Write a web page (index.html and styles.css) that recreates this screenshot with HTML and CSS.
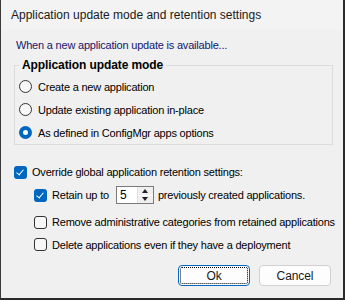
FILE: index.html
```html
<!DOCTYPE html>
<html lang="en">
<head>
    <meta charset="UTF-8">
    <title>Application update mode and retention settings</title>
    <link rel="stylesheet" href="styles.css">
</head>
<body>
    <div class="window">
        <div class="titlebar">Application update mode and retention settings</div>
        <div class="content">
            <p class="intro">When a new application update is available...</p>
            <fieldset class="group">
                <legend>Application update mode</legend>
                <label class="opt"><span class="radio"></span>Create a new application</label>
                <label class="opt"><span class="radio"></span>Update existing application in-place</label>
                <label class="opt"><span class="radio on"></span>As defined in ConfigMgr apps options</label>
            </fieldset>

            <label class="opt override"><span class="check on"></span>Override global application retention settings:</label>
            <div class="sub">
                <div class="opt retain">
                    <span class="check on"></span>Retain up to
                    <span class="spin">
                        <span class="spin-val">5</span>
                        <span class="spin-btns">
                            <span class="arrow up"></span>
                            <span class="arrow down"></span>
                        </span>
                    </span>
                    previously created applications.
                </div>
                <label class="opt remove"><span class="check"></span>Remove administrative categories from retained applications</label>
                <label class="opt delete"><span class="check"></span>Delete applications even if they have a deployment</label>
            </div>

            <div class="buttons">
                <button class="btn default">Ok</button>
                <button class="btn">Cancel</button>
            </div>
        </div>
    </div>
</body>
</html>
```

FILE: styles.css
```css
* {
    margin: 0;
    padding: 0;
    box-sizing: border-box;
    font-family: "Liberation Sans", Arial, sans-serif;
}
body {
    width: 345px;
    height: 300px;
    overflow: hidden;
    background: #2b2b2b;
}
.window {
    width: 345px;
    height: 300px;
    background: #f0f0f0;
    border-left: 1px solid #3a3a3a;
    border-right: 2px solid #2b2b2b;
    border-bottom: 2px solid #2b2b2b;
    color: #000;
    font-size: 11px;
    letter-spacing: -0.2px;
}
.titlebar {
    height: 30px;
    line-height: 31px;
    background: #f3f3f3;
    padding-left: 10px;
    font-size: 12px;
    letter-spacing: 0;
    color: #1a1a1a;
}
.content {
    padding: 8px 12px 0 13px;
}
.intro {
    color: #16166e;
    line-height: 14px;
    padding-left: 2px;
}
.group {
    margin-top: 6px;
    width: 319px;
    height: 87px;
    border: 1px solid #dcdcdc;
    padding: 3px 0 0 4px;
}
.group legend {
    font-weight: bold;
    font-size: 12px;
    letter-spacing: -0.1px;
    line-height: 14px;
    padding: 0 3px;
}
.opt {
    display: flex;
    align-items: center;
    height: 23px;
    white-space: nowrap;
}
.radio {
    flex-shrink: 0;
    width: 13px;
    height: 13px;
    border: 1px solid #333;
    border-radius: 50%;
    background: #f7f7f7;
    margin-right: 6px;
    position: relative;
}
.radio.on {
    border: none;
    background: #0067c0;
}
.radio.on::after {
    content: "";
    position: absolute;
    left: 4px;
    top: 4px;
    width: 5px;
    height: 5px;
    border-radius: 50%;
    background: #fff;
}
.check {
    flex-shrink: 0;
    width: 13px;
    height: 13px;
    border: 1px solid #333;
    border-radius: 3px;
    background: #f7f7f7;
    margin-right: 5px;
    position: relative;
}
.check.on {
    border: none;
    background: #0067c0;
}
.check.on::after {
    content: "";
    position: absolute;
    left: 4px;
    top: 2px;
    width: 3px;
    height: 6px;
    border: solid #fff;
    border-width: 0 1.5px 1.5px 0;
    transform: rotate(40deg);
}
.override {
    margin-top: 17px;
    height: 20px;
}
.sub {
    padding-left: 20px;
}
.retain {
    height: 26px;
}
.spin {
    flex-shrink: 0;
    display: flex;
    width: 38px;
    height: 18px;
    margin: 0 4px 0 7px;
    border: 1px solid #7a7a7a;
    background: #fff;
    letter-spacing: 0;
}
.spin-val {
    flex: 1;
    padding: 1px 0 0 3px;
    font-size: 12px;
}
.spin-btns {
    width: 16px;
    display: flex;
    flex-direction: column;
    background: #f0f0f0;
    border-left: 1px solid #e0e0e0;
}
.arrow {
    flex: 1;
    display: flex;
    align-items: center;
    justify-content: center;
}
.arrow::after {
    content: "";
    border-left: 3.5px solid transparent;
    border-right: 3.5px solid transparent;
}
.arrow.up::after {
    border-bottom: 4px solid #222;
}
.arrow.down {
    border-top: 1px solid #fff;
}
.arrow.down::after {
    border-top: 4px solid #222;
}
.remove {
    margin-top: 2px;
    height: 24px;
}
.delete {
    height: 21px;
}
.buttons {
    display: flex;
    justify-content: flex-end;
    gap: 9px;
    margin-top: 10px;
}
.btn {
    width: 72px;
    height: 21px;
    background: #fdfdfd;
    border: 1px solid #d0d0d0;
    border-radius: 4px;
    font-size: 12px;
    letter-spacing: -0.1px;
    color: #1a1a1a;
}
.btn.default {
    border: 1px solid #0067c0;
    outline: 1px dotted #000;
    outline-offset: -3px;
}
```
